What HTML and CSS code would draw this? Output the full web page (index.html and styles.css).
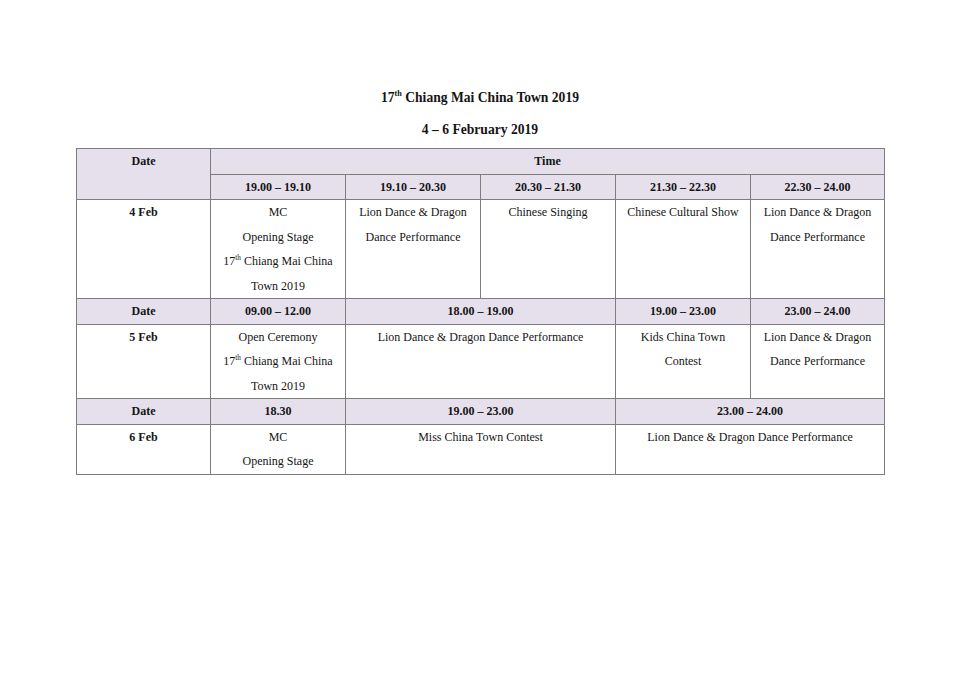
FILE: index.html
```html
<!DOCTYPE html>
<html>
<head>
<meta charset="utf-8">
<link rel="stylesheet" href="styles.css">
</head>
<body>
<div class="page">
  <h1 class="title">17<sup>th</sup> Chiang Mai China Town 2019</h1>
  <h2 class="subtitle">4 – 6 February 2019</h2>
  <table class="schedule">
    <colgroup>
      <col class="c-date">
      <col class="c-slot">
      <col class="c-slot">
      <col class="c-slot">
      <col class="c-slot">
      <col class="c-last">
    </colgroup>
    <tr class="head">
      <th rowspan="2">Date</th>
      <th colspan="5">Time</th>
    </tr>
    <tr class="head">
      <th>19.00 – 19.10</th>
      <th>19.10 – 20.30</th>
      <th>20.30 – 21.30</th>
      <th>21.30 – 22.30</th>
      <th>22.30 – 24.00</th>
    </tr>
    <tr>
      <th>4 Feb</th>
      <td>MC<br>Opening Stage<br>17<sup>th</sup> Chiang Mai China<br>Town 2019</td>
      <td>Lion Dance &amp; Dragon<br>Dance Performance</td>
      <td>Chinese Singing</td>
      <td>Chinese Cultural Show</td>
      <td>Lion Dance &amp; Dragon<br>Dance Performance</td>
    </tr>
    <tr class="head">
      <th>Date</th>
      <th>09.00 – 12.00</th>
      <th colspan="2">18.00 – 19.00</th>
      <th>19.00 – 23.00</th>
      <th>23.00 – 24.00</th>
    </tr>
    <tr>
      <th>5 Feb</th>
      <td>Open Ceremony<br>17<sup>th</sup> Chiang Mai China<br>Town 2019</td>
      <td colspan="2">Lion Dance &amp; Dragon Dance Performance</td>
      <td>Kids China Town<br>Contest</td>
      <td>Lion Dance &amp; Dragon<br>Dance Performance</td>
    </tr>
    <tr class="head">
      <th>Date</th>
      <th>18.30</th>
      <th colspan="2">19.00 – 23.00</th>
      <th colspan="2">23.00 – 24.00</th>
    </tr>
    <tr>
      <th>6 Feb</th>
      <td>MC<br>Opening Stage</td>
      <td colspan="2">Miss China Town Contest</td>
      <td colspan="2">Lion Dance &amp; Dragon Dance Performance</td>
    </tr>
  </table>
</div>
</body>
</html>
```

FILE: styles.css
```css
html, body {
  margin: 0;
  padding: 0;
  background: #ffffff;
}
body {
  font-family: "Liberation Serif", "Times New Roman", serif;
  color: #151515;
}
.page {
  width: 960px;
  height: 678px;
  padding: 90px 0 0 76px;
  box-sizing: border-box;
}
.title, .subtitle {
  width: 808px;
  margin: 0;
  font-size: 13.6px;
  font-weight: bold;
  line-height: 16px;
  text-align: center;
}
.subtitle {
  margin-top: 16px;
}
sup {
  font-size: 0.6em;
  line-height: 0;
  vertical-align: 0.7em;
}
.schedule {
  margin-top: 10px;
  border-collapse: collapse;
  table-layout: fixed;
  width: 808px;
  font-size: 12px;
  line-height: 24.5px;
}
.c-date { width: 134px; }
.c-slot { width: 135px; }
.c-last { width: 134px; }
.schedule th,
.schedule td {
  border: 1px solid #7d7d7d;
  padding: 0;
  text-align: center;
  vertical-align: top;
  white-space: nowrap;
}
.schedule td {
  font-weight: normal;
}
.schedule th {
  font-weight: bold;
}
.head th {
  background: #e5e0ec;
}
```
